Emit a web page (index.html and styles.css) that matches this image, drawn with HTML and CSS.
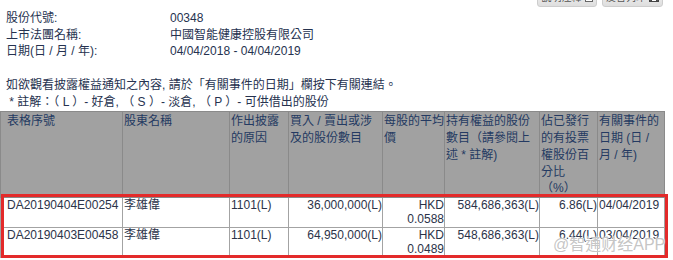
FILE: index.html
```html
<!DOCTYPE html>
<html lang="zh-Hant">
<head>
<meta charset="utf-8">
<title>披露權益</title>
<link rel="stylesheet" href="styles.css">
</head>
<body>
<div class="page">
  <div class="toolbar">
    <span class="btn btn-notes">說明注釋
      <svg class="ico" width="8" height="8" viewBox="0 0 8 8"><rect x="0.5" y="0.5" width="7" height="7" fill="#fff" stroke="#666"/><path d="M2 3h4M2 5h4" stroke="#666"/></svg>
    </span>
    <span class="btn btn-print">友善列印
      <svg class="ico" width="10" height="8" viewBox="0 0 10 8"><rect x="0.5" y="2.5" width="9" height="5" fill="#555" stroke="#444"/><rect x="2.5" y="0.5" width="5" height="2.5" fill="#fff" stroke="#444"/><rect x="2.5" y="5" width="5" height="2.5" fill="#fff" stroke="#444"/></svg>
    </span>
  </div>

  <div class="info">
    <div class="label">股份代號:</div><div class="value">00348</div>
    <div class="label">上市法團名稱:</div><div class="value">中國智能健康控股有限公司</div>
    <div class="label">日期(日 / 月 / 年):</div><div class="value">04/04/2018 - 04/04/2019</div>
  </div>

  <div class="notes">
    <div>如欲觀看披露權益通知之內容, 請於「有關事件的日期」欄按下有關連結。</div>
    <div>&nbsp;* 註解：（ L ）- 好倉, （ S ）- 淡倉, （ P ）- 可供借出的股份</div>
  </div>

  <div class="table-wrap">
    <table class="grid">
      <colgroup>
        <col class="c1"><col class="c2"><col class="c3"><col class="c4">
        <col class="c5"><col class="c6"><col class="c7"><col class="c8">
      </colgroup>
      <thead>
        <tr>
          <th class="first">表格序號</th>
          <th>股東名稱</th>
          <th>作出披露的原因</th>
          <th>買入 / 賣出或涉及的股份數目</th>
          <th>每股的平均價</th>
          <th>持有權益的股份數目（請參閱上述 * 註解)</th>
          <th>佔已發行的有投票權股份百分比<br>（%）</th>
          <th>有關事件的日期 (日 / 月 / 年)</th>
        </tr>
      </thead>
      <tbody>
        <tr>
          <td class="first">DA20190404E00254</td>
          <td>李雄偉</td>
          <td>1101(L)</td>
          <td class="num">36,000,000(L)</td>
          <td class="num">HKD<br>0.0588</td>
          <td class="num">584,686,363(L)</td>
          <td class="num">6.86(L)</td>
          <td>04/04/2019</td>
        </tr>
        <tr>
          <td class="first">DA20190403E00458</td>
          <td>李雄偉</td>
          <td>1101(L)</td>
          <td class="num">64,950,000(L)</td>
          <td class="num">HKD<br>0.0489</td>
          <td class="num">548,686,363(L)</td>
          <td class="num">6.44(L)</td>
          <td>03/04/2019</td>
        </tr>
      </tbody>
    </table>
    <div class="highlight"></div>
    <div class="watermark">@智通财经APP</div>
  </div>
</div>
</body>
</html>
```

FILE: styles.css
```css
html, body {
  margin: 0;
  padding: 0;
  background: #fff;
}

body {
  font-family: "Liberation Sans", "Noto Sans CJK TC", sans-serif;
  font-size: 12px;
  color: #26324f;
  width: 673px;
  height: 260px;
  overflow: hidden;
}

.page {
  position: relative;
}

.toolbar {
  display: flex;
  justify-content: flex-end;
  gap: 5px;
  margin-top: -12px;
  padding-right: 10px;
  height: 19px;
}

.btn {
  display: flex;
  align-items: center;
  justify-content: center;
  gap: 3px;
  height: 19px;
  box-sizing: border-box;
  padding: 0 2px;
  border: 1px solid #cdcdcd;
  border-radius: 3px;
  background: linear-gradient(#f6f6f6, #dedede);
  color: #555;
  font-size: 10px;
  line-height: 17px;
  white-space: nowrap;
}

.btn-notes {
  width: 60px;
}

.btn-print {
  width: 61px;
}

.ico {
  flex: none;
}

.info {
  display: grid;
  grid-template-columns: 164px 1fr;
  margin-top: 3px;
  padding-left: 6px;
  line-height: 16.7px;
}

.notes {
  margin-top: 16.7px;
  padding-left: 6px;
  line-height: 16.7px;
  white-space: nowrap;
}

.table-wrap {
  position: relative;
  margin-top: 1px;
}

.grid {
  table-layout: fixed;
  border-collapse: collapse;
  width: 664px;
}

.c1 { width: 122px; }
.c2 { width: 107px; }
.c3 { width: 59px; }
.c4 { width: 94px; }
.c5 { width: 62px; }
.c6 { width: 95px; }
.c7 { width: 58px; }
.c8 { width: 67px; }

.grid th {
  background: #a1a1a1;
  border: 1px solid #8a8a8a;
  color: #243a62;
  font-weight: normal;
  text-align: left;
  vertical-align: top;
  padding: 1px 0 0 1px;
  line-height: 16.8px;
}

.grid td {
  border: 1px solid #a3a3a3;
  vertical-align: top;
  padding: 1px 1px 1px 1px;
  line-height: 13.5px;
  color: #2b3349;
  white-space: nowrap;
}

.grid .first {
  padding-left: 6px;
}

.grid td.num {
  text-align: right;
  padding-right: 0;
}

.highlight {
  position: absolute;
  left: 1px;
  top: 83px;
  width: 667px;
  height: 64px;
  box-sizing: border-box;
  border: 3px solid #e32a2a;
  pointer-events: none;
}

.watermark {
  position: absolute;
  left: 553px;
  top: 124px;
  font-family: "Liberation Sans", "Noto Sans CJK SC", sans-serif;
  font-size: 16px;
  line-height: 20px;
  color: rgba(190, 190, 190, 0.9);
  text-shadow: 0 0 2px #fff, 0 0 1px #fff;
  white-space: nowrap;
}
```
